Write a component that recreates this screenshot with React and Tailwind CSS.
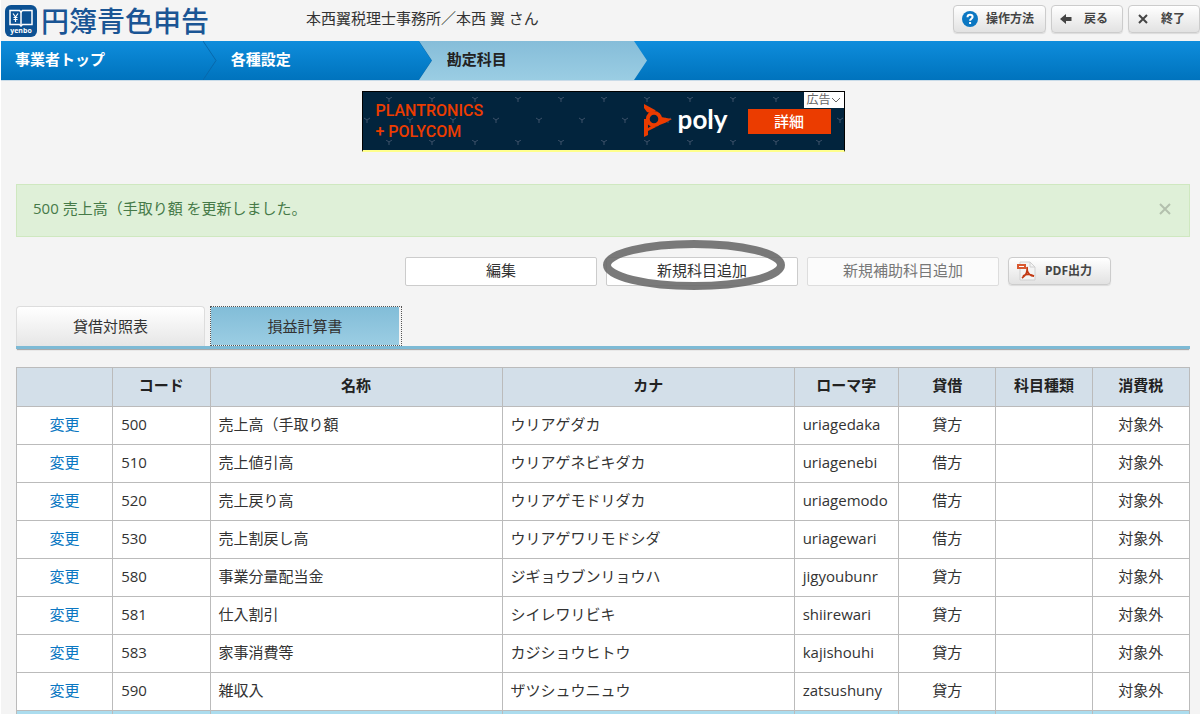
import React from 'react';

const steps = [
  { name: '事業者トップ', active: false },
  { name: '各種設定', active: false },
  { name: '勘定科目', active: true },
];

const columns = [
  { name: '', width: 'w-[8.2%]' },
  { name: 'コード', width: 'w-[8.3%]' },
  { name: '名称', width: 'w-[24.9%]' },
  { name: 'カナ', width: 'w-[24.9%]' },
  { name: 'ローマ字', width: 'w-[8.9%]' },
  { name: '貸借', width: 'w-[8.3%]' },
  { name: '科目種類', width: 'w-[8.2%]' },
  { name: '消費税', width: 'w-[8.3%]' },
];

const accounts = [
  { code: '500', name: '売上高（手取り額', kana: 'ウリアゲダカ', roma: 'uriagedaka', side: '貸方', tax: '対象外' },
  { code: '510', name: '売上値引高', kana: 'ウリアゲネビキダカ', roma: 'uriagenebi', side: '借方', tax: '対象外' },
  { code: '520', name: '売上戻り高', kana: 'ウリアゲモドリダカ', roma: 'uriagemodo', side: '借方', tax: '対象外' },
  { code: '530', name: '売上割戻し高', kana: 'ウリアゲワリモドシダ', roma: 'uriagewari', side: '借方', tax: '対象外' },
  { code: '580', name: '事業分量配当金', kana: 'ジギョウブンリョウハ', roma: 'jigyoubunr', side: '貸方', tax: '対象外' },
  { code: '581', name: '仕入割引', kana: 'シイレワリビキ', roma: 'shiirewari', side: '貸方', tax: '対象外' },
  { code: '583', name: '家事消費等', kana: 'カジショウヒトウ', roma: 'kajishouhi', side: '貸方', tax: '対象外' },
  { code: '590', name: '雑収入', kana: 'ザツシュウニュウ', roma: 'zatsushuny', side: '貸方', tax: '対象外' },
];

const grayButton =
  'flex items-center h-7 rounded border border-[#cccccc] bg-linear-to-b from-white to-[#e2e2e2] text-xs font-bold text-[#444444] shadow-[0_1px_1px_rgba(0,0,0,0.1)] whitespace-nowrap';

const plainButton = 'h-[29px] w-48 rounded-xs border pb-[2px] text-center';

function Logo() {
  return (
    <a href="#top" className="flex items-center gap-1">
      <span className="flex h-8 w-8 flex-col items-center rounded-md bg-[#0c5193] pt-1 text-white">
        <svg width="24" height="18" viewBox="0 0 24 18" fill="none" stroke="currentColor">
          <path d="M1 1.5h9.5L12 3l1.5-1.5H23v14h-9.5L12 17l-1.5-1.5H1z" strokeWidth="1.5" />
          <path d="M12 3v13" strokeWidth="1.5" />
          <path d="M4 4.5l2.5 3.5L9 4.5M6.5 8v5M4.5 8.5h4M4.5 10.5h4" strokeWidth="1.2" />
        </svg>
        <span className="text-[7px] leading-2 font-bold">yenbo</span>
      </span>
      <span className="text-[28px] leading-8 font-medium text-[#1a5594]">円簿青色申告</span>
    </a>
  );
}

function Header() {
  return (
    <header className="flex h-[41px] items-center justify-between pl-1">
      <div className="flex flex-1 items-center">
        <div className="w-[301px]">
          <Logo />
        </div>
        <p className="pb-1 text-[15px]">本西翼税理士事務所／本西 翼 さん</p>
      </div>
      <div className="flex gap-[5px] pb-1">
        <button type="button" className={`${grayButton} w-[93px] gap-2 pl-2`}>
          <svg width="16" height="16" viewBox="0 0 16 16" fill="none" stroke="white" strokeWidth="2">
            <circle cx="8" cy="8" r="8" fill="#0b77c2" stroke="none" />
            <path d="M5.5 6.2C5.5 3 10.6 3.2 10.6 6c0 1.7-2.5 1.7-2.5 3.7M8.1 11v2" />
          </svg>
          操作方法
        </button>
        <button type="button" className={`${grayButton} w-[72px] gap-3 pl-2`}>
          <svg width="12" height="12" viewBox="0 0 12 12" fill="#444444">
            <path d="M0 6l6-5v3h5.5v4H6v3z" />
          </svg>
          戻る
        </button>
        <button type="button" className={`${grayButton} w-[72px] gap-3 pl-2`}>
          <svg width="12" height="12" viewBox="0 0 12 12" stroke="#444444" strokeWidth="2">
            <path d="M2 2l8 8M10 2l-8 8" />
          </svg>
          終了
        </button>
      </div>
    </header>
  );
}

function Breadcrumb() {
  return (
    <nav className="flex h-[39px] bg-linear-to-b from-[#0f8ddc] to-[#0073bd] shadow-[0_1px_0_#c9dbe8]">
      {steps.map((step) => (
        <a
          key={step.name}
          href="#step"
          className={`relative flex w-[18%] items-center pb-[2px] pl-[14px] text-[15px] font-bold ${
            step.active ? 'bg-linear-to-b from-[#86bdd9] to-[#9acde3] text-[#222222]' : 'text-white'
          }`}
        >
          {step.name}
          {step.active ? (
            <>
              <svg className="absolute top-0 right-0" width="14" height="39" viewBox="0 0 14 39">
                <defs>
                  <linearGradient id="stepBlue" x1="0" y1="0" x2="0" y2="1">
                    <stop offset="0" stopColor="#0f8ddc" />
                    <stop offset="1" stopColor="#0073bd" />
                  </linearGradient>
                </defs>
                <path d="M0 0H14V39H0L13 19.5z" fill="url(#stepBlue)" />
              </svg>
              <svg className="absolute top-0 -left-[14px]" width="28" height="39" viewBox="0 0 28 39">
                <defs>
                  <linearGradient id="stepLight" x1="0" y1="0" x2="0" y2="1">
                    <stop offset="0" stopColor="#86bdd9" />
                    <stop offset="1" stopColor="#9acde3" />
                  </linearGradient>
                </defs>
                <path d="M0 0H28V39H0L13 19.5z" fill="url(#stepLight)" />
              </svg>
            </>
          ) : (
            <svg className="absolute top-0 right-0" width="14" height="39" viewBox="0 0 14 39" fill="none">
              <path d="M0 0l13 19.5L0 39" stroke="#0868ab" />
            </svg>
          )}
        </a>
      ))}
    </nav>
  );
}

function Banner() {
  return (
    <div className="relative mx-auto flex h-[61px] w-[483px] items-center border border-b-2 border-black border-b-[#ffff8c] bg-[#02243d] pr-[13px] pl-[13px]">
      <svg className="absolute inset-0 h-full w-full" aria-hidden="true">
        <defs>
          <pattern id="sprigs" width="43" height="43" patternUnits="userSpaceOnUse" x="3" y="5">
            <path d="M20 0l3 2 3-2M23 2v3M-2 21l3 2 3-2M1 23v3M41 21l3 2 3-2" stroke="#3b5068" fill="none" />
          </pattern>
        </defs>
        <rect width="100%" height="100%" fill="url(#sprigs)" />
      </svg>
      <p className="relative flex-1 font-['Roboto'] text-base leading-[21px] font-medium text-[#eb3c00]">
        PLANTRONICS
        <br />+ POLYCOM
      </p>
      <div className="relative mr-5 flex items-center gap-[6px] text-white">
        <svg width="28" height="34" viewBox="0 0 28 34" fill="#eb3c00">
          <circle cx="10" cy="15" r="6.2" fill="none" stroke="#eb3c00" strokeWidth="3.8" />
          <path d="M0 0L12 6.5 6 9 3 8 0 4zM28 15L22 18.500 13 22l3-5 1-4zM0 15h4v9l5-3 3 2-8 4v4l-4 2z" />
        </svg>
        <span className="pb-1 font-['Lato'] text-[26px] leading-8 font-bold">poly</span>
      </div>
      <a href="#detail" className="relative flex h-[25px] w-[83px] items-center justify-center bg-[#eb3c00] text-[15px] font-medium text-white">
        詳細
      </a>
      <span className="absolute top-0 right-0 flex h-4 w-10 items-center justify-center bg-white text-xs text-[#666666]">
        広告
        <svg width="10" height="8" viewBox="0 0 10 8" fill="none" stroke="#666666">
          <path d="M1 2l4 4 4-4" />
        </svg>
      </span>
    </div>
  );
}

function Toolbar() {
  return (
    <div className="mt-5 flex justify-end gap-[9px] pr-[79px]">
      <button type="button" className={`${plainButton} border-[#cccccc] bg-white`}>編集</button>
      <div className="relative">
        <button type="button" className={`${plainButton} border-[#cccccc] bg-white`}>新規科目追加</button>
        <svg className="pointer-events-none absolute -top-[18px] -left-1" width="184" height="52" viewBox="0 0 184 52" fill="none">
          <ellipse cx="92" cy="26" rx="87" ry="21" stroke="#6b6b6b" strokeOpacity="0.9" strokeWidth="8" />
        </svg>
      </div>
      <button type="button" disabled className={`${plainButton} border-[#dddddd] bg-[#fbfbfb] text-[#777777]`}>新規補助科目追加</button>
      <button type="button" className={`${grayButton} w-[103px] gap-2 pl-2`}>
        <svg width="20" height="20" viewBox="0 0 20 20" fill="none">
          <path d="M3 1h10l5 5v13H3z" fill="#f4f4f4" stroke="#d0d0d0" />
          <path d="M13 1v5h5" stroke="#d0d0d0" />
          <path d="M0 3h9v5H0z" fill="#d9582f" />
          <path d="M2 5.5h5" stroke="white" />
          <path d="M10 6c1 5-2 9-5 11M10 9c1 4 4 6 7 6M6 15c3-2 7-2 11 0" stroke="#c23a14" strokeWidth="1.8" />
        </svg>
        PDF出力
      </button>
    </div>
  );
}

export default function App() {
  return (
    <div className="border-l border-white bg-[#f4f4f4] font-['Open_Sans','Noto_Sans_CJK_JP',sans-serif] text-[#333333]">
      <Header />
      <Breadcrumb />

      <main className="pt-[11px] pr-[10px] pl-[15px] text-[15px]">
        <Banner />

        <div role="alert" className="mt-8 flex h-[53px] items-center justify-between border border-[#cfe8c0] bg-[#dff0d8] px-4 pb-1 text-[#467a48]">
          500 売上高（手取り額 を更新しました。
          <button type="button" aria-label="閉じる" className="text-[#b3c0ad]">
            <svg width="16" height="16" viewBox="0 0 16 16" fill="none" stroke="currentColor" strokeWidth="2">
              <path d="M3 3l10 10M13 3L3 13" />
            </svg>
          </button>
        </div>

        <Toolbar />

        {/* Tabs */}
        <div className="mt-5 flex gap-[5px] border-b-3 border-[#7dbad5] shadow-[0_2px_1px_-1px_#aaaaaa]">
          <button type="button" className="h-10 w-[189px] rounded-t border border-b-0 border-[#dddddd] bg-linear-to-b from-white to-[#e6e6e6]">
            貸借対照表
          </button>
          <button type="button" className="h-10 border border-dotted border-[#555555] pr-[2px]">
            <span className="flex h-full w-[188px] items-center justify-center bg-linear-to-b from-[#82bdd8] to-[#9bcde3]">損益計算書</span>
          </button>
        </div>

        <table className="mt-[18px] w-full table-fixed border-collapse bg-white">
          <thead>
            <tr className="h-[39px] bg-[#d3dfe9] text-[#222222]">
              {columns.map((col, i) => (
                <th key={i} className={`${col.width} border border-[#bbbbbb] p-0 pb-1 font-bold`}>{col.name}</th>
              ))}
            </tr>
          </thead>
          <tbody>
            {accounts.map((row) => (
              <tr key={row.code} className="h-[38px] *:border *:border-[#bbbbbb] *:px-2 *:pt-0 *:pb-[2px] *:whitespace-nowrap">
                <td className="text-center">
                  <a href="#edit" className="text-[#0b77c2]">変更</a>
                </td>
                <td>{row.code}</td>
                <td>{row.name}</td>
                <td>{row.kana}</td>
                <td>{row.roma}</td>
                <td className="text-center">{row.side}</td>
                <td></td>
                <td className="text-center">{row.tax}</td>
              </tr>
            ))}
            <tr className="h-1 bg-[#abdcee]">
              {columns.map((col, i) => (
                <td key={i} className="border border-b-0 border-[#bbbbbb] p-0"></td>
              ))}
            </tr>
          </tbody>
        </table>
      </main>
    </div>
  );
}
